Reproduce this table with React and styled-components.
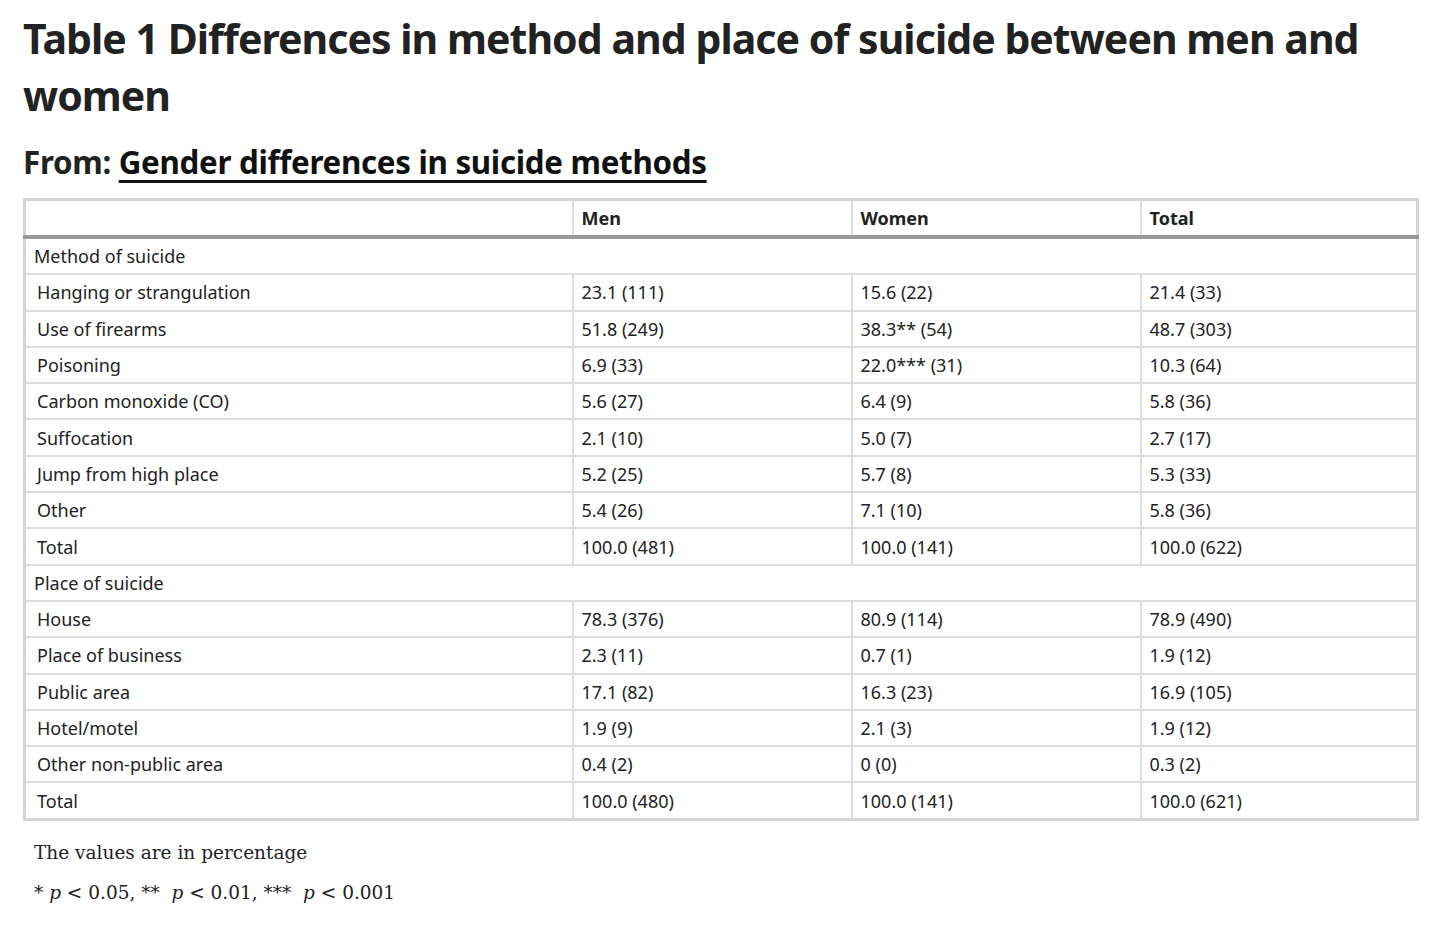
import React from 'react'
import styled, { createGlobalStyle } from 'styled-components'

const GlobalStyle = createGlobalStyle`
  body {
    margin: 0;
    background: #fff;
    color: #222;
    font-family: 'Noto Sans', sans-serif;
  }
`

const Page = styled.div`
  padding: 10px 37px 0 23px;
`

const Title = styled.h1`
  margin: 0;
  font-size: 41px;
  line-height: 57px;
  font-weight: 700;
  letter-spacing: -0.95px;
  color: #222;
`

const From = styled.h2`
  margin: 18px 0 0;
  font-size: 31.3px;
  line-height: 40px;
  font-weight: 700;
  letter-spacing: -0.3px;
  color: #222;

  a {
    color: #111;
    text-decoration: underline;
    text-decoration-thickness: 3px;
    text-underline-offset: 6px;
  }
`

const Table = styled.table`
  margin-top: 16px;
  width: 100%;
  border-collapse: collapse;
  border: 3px solid #d4d4d4;
  font-size: 18px;
`

const Head = styled.th`
  text-align: left;
  font-weight: 700;
  height: 34px;
  padding: 0 8px;
  border-left: 2px solid #dcdcdc;
  border-bottom: 4px solid #999;
  &:first-child { border-left: none; }
`

const Cell = styled.td`
  height: 34.3px;
  padding: 0 8px 0 ${p => (p.$section ? '8px' : p.$first ? '11px' : '8px')};
  border-left: 2px solid #dcdcdc;
  border-top: 2px solid #dcdcdc;
  &:first-child { border-left: none; }
  white-space: nowrap;
`

const Notes = styled.div`
  padding: 12px 0 0 11px;
  font-family: 'DejaVu Serif', serif;
  font-size: 18.5px;
  line-height: 40px;
  color: #222;

  i { font-style: italic; }
`

const sections = [
  {
    name: 'Method of suicide',
    rows: [
      ['Hanging or strangulation', '23.1 (111)', '15.6 (22)', '21.4 (33)'],
      ['Use of firearms', '51.8 (249)', '38.3** (54)', '48.7 (303)'],
      ['Poisoning', '6.9 (33)', '22.0*** (31)', '10.3 (64)'],
      ['Carbon monoxide (CO)', '5.6 (27)', '6.4 (9)', '5.8 (36)'],
      ['Suffocation', '2.1 (10)', '5.0 (7)', '2.7 (17)'],
      ['Jump from high place', '5.2 (25)', '5.7 (8)', '5.3 (33)'],
      ['Other', '5.4 (26)', '7.1 (10)', '5.8 (36)'],
      ['Total', '100.0 (481)', '100.0 (141)', '100.0 (622)']
    ]
  },
  {
    name: 'Place of suicide',
    rows: [
      ['House', '78.3 (376)', '80.9 (114)', '78.9 (490)'],
      ['Place of business', '2.3 (11)', '0.7 (1)', '1.9 (12)'],
      ['Public area', '17.1 (82)', '16.3 (23)', '16.9 (105)'],
      ['Hotel/motel', '1.9 (9)', '2.1 (3)', '1.9 (12)'],
      ['Other non-public area', '0.4 (2)', '0 (0)', '0.3 (2)'],
      ['Total', '100.0 (480)', '100.0 (141)', '100.0 (621)']
    ]
  }
]

function App () {
  return (
    <>
      <GlobalStyle />
      <Page>
        <Title>Table 1 Differences in method and place of suicide between men and women</Title>
        <From>From: <a href='#'>Gender differences in suicide methods</a></From>
        <Table>
          <colgroup>
            <col style={{ width: '548px' }} />
            <col style={{ width: '279px' }} />
            <col style={{ width: '289px' }} />
            <col />
          </colgroup>
          <thead>
            <tr>
              <Head />
              <Head>Men</Head>
              <Head>Women</Head>
              <Head>Total</Head>
            </tr>
          </thead>
          <tbody>
            {sections.map(s => (
              <React.Fragment key={s.name}>
                <tr>
                  <Cell $section $first colSpan={4}>{s.name}</Cell>
                </tr>
                {s.rows.map((r, i) => (
                  <tr key={i}>
                    {r.map((c, j) => (
                      <Cell key={j} $first={j === 0}>{c}</Cell>
                    ))}
                  </tr>
                ))}
              </React.Fragment>
            ))}
          </tbody>
        </Table>
        <Notes>
          <div>The values are in percentage</div>
          <div>* <i>p</i> &lt; 0.05, **&nbsp; <i>p</i> &lt; 0.01, ***&nbsp; <i>p</i> &lt; 0.001</div>
        </Notes>
      </Page>
    </>
  )
}

export default App
